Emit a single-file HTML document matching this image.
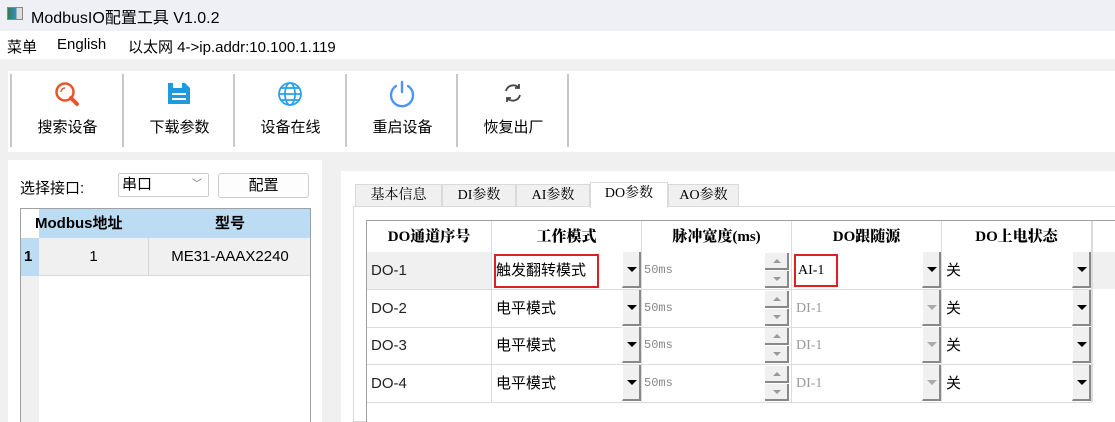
<!DOCTYPE html><html><head><meta charset="utf-8"><style>
*{box-sizing:border-box;margin:0;padding:0}
body{width:1115px;height:422px;overflow:hidden;background:#f0f0f0;font-family:"Liberation Sans","Noto Sans CJK SC",sans-serif;font-size:15px;color:#000;position:relative}
.a{position:absolute}
.sep{position:absolute;top:74px;width:2px;height:73px;background:#c8c8c8}
.tb{position:absolute;top:116px;width:111px;text-align:center;font-size:15px}
.tab{position:absolute;top:184px;height:23px;background:#f0f0f0;border:1px solid #dadada;border-bottom:none;text-align:center;font-size:14px;line-height:22px;font-family:"Liberation Serif","Noto Serif CJK SC",serif}
.cell{position:absolute;border-right:1px solid #dcdcdc;border-bottom:1px solid #dcdcdc;height:38px;line-height:37px;font-size:15px}
.hd{font-weight:900;text-align:center;font-family:"Liberation Serif","Noto Serif CJK SC",serif;line-height:32px;height:32px;font-size:15px}
.dd{position:absolute;width:19px;height:36px;background:#f0f0f0;border-right:2px solid #888;border-bottom:2px solid #888;border-left:1px solid #fff}
.dd:after{content:"";position:absolute;left:4px;top:15px;border-left:5px solid transparent;border-right:5px solid transparent;border-top:5px solid #000}
.dd.g:after{border-top-color:#aaa}
.sp{position:absolute;width:24px;height:36px}
.sp div{position:absolute;left:0;width:24px;height:17px;background:#f0f0f0;border-right:2px solid #888;border-bottom:2px solid #888}
.sp div:after{content:"";position:absolute;left:8px;top:6px;border-left:4px solid transparent;border-right:4px solid transparent}
.sp .u:after{border-bottom:4px solid #999}
.sp .d:after{border-top:4px solid #999}
.mono{font-family:"Liberation Mono",monospace;font-size:12px;color:#888}
.ser{font-family:"Liberation Serif",serif;font-size:14px}
</style></head><body>
<div class="a" style="left:0;top:0;width:1115px;height:31px;background:#eff0f5"></div>
<div class="a" style="left:7px;top:7px;width:16px;height:13px;border:1px solid #888;background:linear-gradient(90deg,#2e7d5a,#3a8fc0 60%,#ddd 60%)"></div>
<div class="a" style="left:31px;top:4px;font-size:16px">ModbusIO配置工具 V1.0.2</div>
<div class="a" style="left:0;top:31px;width:1115px;height:28px;background:#fff"></div>
<div class="a" style="left:7px;top:36px;font-size:15px">菜单</div>
<div class="a" style="left:57px;top:36px;font-size:15px">English</div>
<div class="a" style="left:128px;top:36px;font-size:15px">以太网 4-&gt;ip.addr:10.100.1.119</div>
<div class="a" style="left:8px;top:71px;width:1107px;height:81px;background:#fff"></div>
<div class="sep" style="left:10px"></div><div class="sep" style="left:122px"></div><div class="sep" style="left:233px"></div><div class="sep" style="left:345px"></div><div class="sep" style="left:456px"></div><div class="sep" style="left:567px"></div>
<svg class="a" style="left:52px;top:80px" width="30" height="30" viewBox="0 0 30 30"><circle cx="13" cy="12" r="8.5" fill="none" stroke="#e8552c" stroke-width="2.5"/><path d="M9 12a4 4 0 0 1 4-4" stroke="#e8552c" stroke-width="1.5" fill="none"/><path d="M19 18l6 6" stroke="#e8552c" stroke-width="4" stroke-linecap="round"/></svg>
<svg class="a" style="left:166px;top:80px" width="26" height="26" viewBox="0 0 26 26"><path d="M2 3h17l5 5v16H2z" fill="#1e9ae0"/><rect x="7" y="3" width="9" height="5" fill="#fff"/><rect x="6" y="13" width="14" height="2" fill="#fff"/><rect x="6" y="18" width="14" height="2" fill="#fff"/></svg>
<svg class="a" style="left:276px;top:80px" width="28" height="28" viewBox="0 0 28 28" fill="none" stroke="#2aa1e8" stroke-width="1.8"><circle cx="14" cy="14" r="11"/><ellipse cx="14" cy="14" rx="5" ry="11"/><path d="M3 14h22M5 8h18M5 20h18"/></svg>
<svg class="a" style="left:387px;top:79px" width="30" height="30" viewBox="0 0 30 30" fill="none" stroke="#4c95f5" stroke-width="2.4" stroke-linecap="round"><path d="M9 7a11 11 0 1 0 12 0"/><path d="M15 3v10"/></svg>
<svg class="a" style="left:502px;top:82px" width="22" height="22" viewBox="0 0 22 22" fill="none" stroke="#444" stroke-width="1.8"><path d="M4 9a7.5 7.5 0 0 1 13-3"/><path d="M17 2v4h-4"/><path d="M18 13a7.5 7.5 0 0 1-13 3"/><path d="M5 20v-4h4"/></svg>
<div class="tb" style="left:12px">搜索设备</div><div class="tb" style="left:124px">下载参数</div><div class="tb" style="left:235px">设备在线</div><div class="tb" style="left:347px">重启设备</div><div class="tb" style="left:458px">恢复出厂</div>
<!-- left panel -->
<div class="a" style="left:8px;top:160px;width:314px;height:262px;background:#fff"></div>
<div class="a" style="left:20px;top:177px;font-size:15px">选择接口:</div>
<div class="a" style="left:118px;top:173px;width:91px;height:24px;border:1px solid #ccc;border-radius:2px;font-size:15px;padding-left:3px;line-height:22px">串口<span style="position:absolute;right:6px;top:0;color:#666;font-size:10px">﹀</span></div>
<div class="a" style="left:218px;top:173px;width:91px;height:25px;border:1px solid #ccc;border-radius:3px;background:#fdfdfd;text-align:center;line-height:23px;font-size:15px">配置</div>
<div class="a" style="left:20px;top:208px;width:291px;height:214px;border:1px solid #a0a0a0;border-bottom:none;background:#fff"></div>
<div class="a" style="left:21px;top:209px;width:18px;height:213px;background:#f0f0f0"></div>
<div class="a" style="left:21px;top:209px;width:18px;height:29px;background:#fff"></div>
<div class="a" style="left:39px;top:209px;width:271px;height:29px;background:#bcdcf4;font-weight:bold;font-size:15px;line-height:29px"><span style="position:absolute;left:-4px;width:100px;text-align:left;overflow:hidden;white-space:nowrap">Modbus地址</span><span style="position:absolute;left:111px;width:160px;text-align:center">型号</span></div>
<div class="a" style="left:21px;top:238px;width:18px;height:38px;background:#bcdcf4;font-weight:bold;line-height:38px;padding-left:3px">1</div>
<div class="a" style="left:39px;top:238px;width:271px;height:38px;background:#f0f0f0;border-bottom:1px solid #d8d8d8;line-height:37px"><span style="position:absolute;left:0;width:110px;text-align:center;border-right:1px solid #d8d8d8;height:37px">1</span><span style="position:absolute;left:111px;width:160px;text-align:center">ME31-AAAX2240</span></div>
<!-- right panel -->
<div class="a" style="left:341px;top:171px;width:774px;height:251px;background:#fff"></div>
<div class="tab" style="left:355px;width:87px">基本信息</div>
<div class="tab" style="left:442px;width:74px">DI参数</div>
<div class="tab" style="left:516px;width:74px">AI参数</div>
<div class="tab" style="left:668px;width:71px">AO参数</div>
<div class="a" style="left:353px;top:206px;width:762px;height:216px;border:1px solid #dadada;border-right:none;background:#fff"></div>
<div class="tab" style="left:590px;top:182px;width:78px;height:26px;background:#fff;z-index:2">DO参数</div>
<div class="a" style="left:366px;top:220px;width:749px;height:202px;border:1px solid #a0a0a0;border-right:none;border-bottom:none;background:#fff"></div>
<!-- header -->
<div class="cell hd" style="left:367px;top:221px;width:125px;border-bottom:none">DO通道序号</div>
<div class="cell hd" style="left:492px;top:221px;width:150px;border-bottom:none">工作模式</div>
<div class="cell hd" style="left:642px;top:221px;width:150px;border-bottom:none">脉冲宽度(ms)</div>
<div class="cell hd" style="left:792px;top:221px;width:150px;border-bottom:none">DO跟随源</div>
<div class="cell hd" style="left:942px;top:221px;width:150px;border-bottom:none">DO上电状态</div>
<div class="a" style="left:1092px;top:252px;width:23px;height:37px;background:#f0f0f0"></div>
<div class="a" style="left:367px;top:252px;width:125px;height:37px;background:#f0f0f0"></div>

<div class="cell" style="left:367px;top:252px;width:125px;padding-left:4px;color:#222">DO-1</div>
<div class="cell" style="left:492px;top:252px;width:150px"></div>
<div class="a" style="left:494px;top:254px;width:105px;height:34px;border:2px solid #e02020;line-height:30px;font-size:15px">触发翻转模式</div>
<div class="dd" style="left:622px;top:252px"></div>
<div class="cell mono" style="left:642px;top:252px;width:150px;padding-left:2px">50ms</div>
<div class="sp" style="left:765px;top:253px"><div class="u" style="top:0"></div><div class="d" style="top:18px"></div></div>
<div class="cell" style="left:792px;top:252px;width:150px"></div>
<div class="a ser" style="left:794px;top:254px;width:44px;height:33px;border:2px solid #e02020;line-height:29px;padding-left:2px;font-size:14px">AI-1</div>
<div class="dd" style="left:922px;top:252px"></div>
<div class="cell" style="left:942px;top:252px;width:150px;padding-left:4px">关</div>
<div class="dd" style="left:1072px;top:252px"></div>

<div class="cell" style="left:367px;top:290px;width:125px;padding-left:4px;color:#222">DO-2</div>
<div class="cell" style="left:492px;top:290px;width:150px;padding-left:4px">电平模式</div>
<div class="dd" style="left:622px;top:290px"></div>
<div class="cell mono" style="left:642px;top:290px;width:150px;padding-left:2px">50ms</div>
<div class="sp" style="left:765px;top:291px"><div class="u" style="top:0"></div><div class="d" style="top:18px"></div></div>
<div class="cell ser" style="left:792px;top:290px;width:150px;padding-left:4px;color:#999">DI-1</div>
<div class="dd g" style="left:922px;top:290px"></div>
<div class="cell" style="left:942px;top:290px;width:150px;padding-left:4px">关</div>
<div class="dd" style="left:1072px;top:290px"></div>

<div class="cell" style="left:367px;top:327px;width:125px;padding-left:4px;color:#222">DO-3</div>
<div class="cell" style="left:492px;top:327px;width:150px;padding-left:4px">电平模式</div>
<div class="dd" style="left:622px;top:327px"></div>
<div class="cell mono" style="left:642px;top:327px;width:150px;padding-left:2px">50ms</div>
<div class="sp" style="left:765px;top:328px"><div class="u" style="top:0"></div><div class="d" style="top:18px"></div></div>
<div class="cell ser" style="left:792px;top:327px;width:150px;padding-left:4px;color:#999">DI-1</div>
<div class="dd g" style="left:922px;top:327px"></div>
<div class="cell" style="left:942px;top:327px;width:150px;padding-left:4px">关</div>
<div class="dd" style="left:1072px;top:327px"></div>

<div class="cell" style="left:367px;top:365px;width:125px;padding-left:4px;color:#222">DO-4</div>
<div class="cell" style="left:492px;top:365px;width:150px;padding-left:4px">电平模式</div>
<div class="dd" style="left:622px;top:365px"></div>
<div class="cell mono" style="left:642px;top:365px;width:150px;padding-left:2px">50ms</div>
<div class="sp" style="left:765px;top:366px"><div class="u" style="top:0"></div><div class="d" style="top:18px"></div></div>
<div class="cell ser" style="left:792px;top:365px;width:150px;padding-left:4px;color:#999">DI-1</div>
<div class="dd g" style="left:922px;top:365px"></div>
<div class="cell" style="left:942px;top:365px;width:150px;padding-left:4px">关</div>
<div class="dd" style="left:1072px;top:365px"></div>
<div class="a" style="left:1092px;top:221px;width:1px;height:181px;background:#dcdcdc"></div>
</body></html>
